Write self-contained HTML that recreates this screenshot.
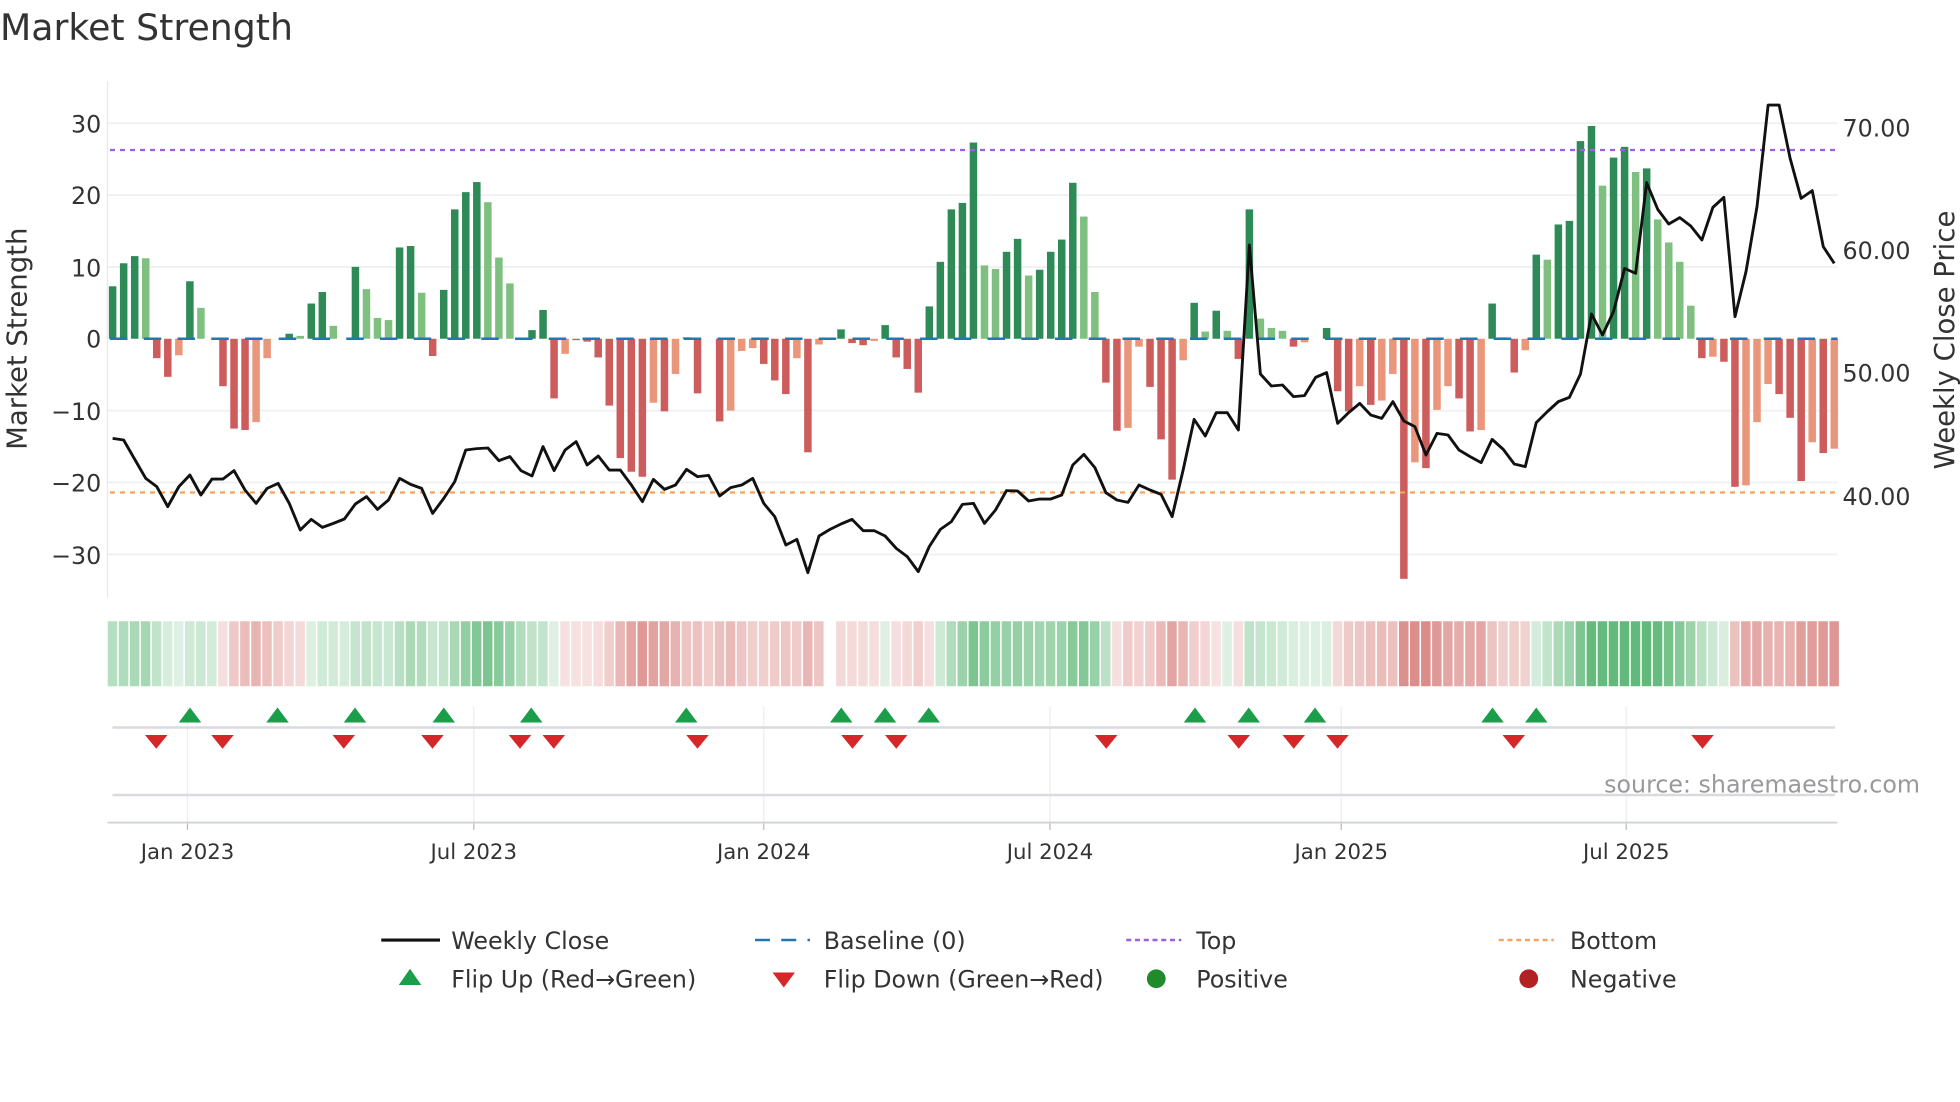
<!DOCTYPE html>
<html><head><meta charset="utf-8">
<style>
html,body{margin:0;padding:0;background:#fff;}
svg{display:block;font-family:"DejaVu Sans","Liberation Sans",sans-serif;}
</style></head>
<body>
<svg id="c" width="1960" height="1102" viewBox="0 0 1568 881.6" xmlns="http://www.w3.org/2000/svg">
<text x="0" y="32" font-size="29" fill="#333">Market Strength</text>
<g id="grid"></g>
<line x1="86" y1="65" x2="86" y2="478" stroke="#e6e8eb" stroke-width="1"/>
<g id="strip"></g>
<g id="bars"></g>
<line x1="88" y1="271" x2="1470" y2="271" stroke="#1f77b4" stroke-width="2" stroke-dasharray="14,13"/>
<line x1="88" y1="120" x2="1470" y2="120" stroke="#9b5fe0" stroke-width="1.8" stroke-dasharray="4,4"/>
<line x1="88" y1="394" x2="1470" y2="394" stroke="#f4a460" stroke-width="1.8" stroke-dasharray="4,4"/>
<polyline id="price" fill="none" stroke="#111" stroke-width="2.3" stroke-linejoin="round"/>
<g font-size="19" fill="#333" text-anchor="end">
<text x="81" y="106">30</text><text x="81" y="163">20</text><text x="81" y="221">10</text><text x="81" y="278">0</text>
<text x="81" y="336">−10</text><text x="81" y="393">−20</text><text x="81" y="451">−30</text>
</g>
<g font-size="19" fill="#333">
<text x="1474" y="109">70.00</text><text x="1474" y="207">60.00</text><text x="1474" y="305">50.00</text><text x="1474" y="404">40.00</text>
</g>
<text transform="translate(21,271) rotate(-90)" font-size="22" fill="#333" text-anchor="middle">Market Strength</text>
<text transform="translate(1563,272) rotate(-90)" font-size="22" fill="#333" text-anchor="middle">Weekly Close Price</text>
<g id="vg"></g>
<line x1="90" y1="582" x2="1468" y2="582" stroke="#d9dadd" stroke-width="2"/>
<line x1="90" y1="636" x2="1468" y2="636" stroke="#d9dadd" stroke-width="2"/>
<line x1="86" y1="658" x2="1470" y2="658" stroke="#cfd2d6" stroke-width="1.5"/>
<g id="marks"></g>
<text x="1536" y="634" font-size="19" fill="#999" text-anchor="end">source: sharemaestro.com</text>
<g font-size="17" fill="#333" text-anchor="middle">
<text x="150" y="687">Jan 2023</text><text x="379" y="687">Jul 2023</text><text x="611" y="687">Jan 2024</text>
<text x="840" y="687">Jul 2024</text><text x="1073" y="687">Jan 2025</text><text x="1301" y="687">Jul 2025</text>
</g>
<g font-size="19" fill="#333">
<line x1="305" y1="752" x2="352" y2="752" stroke="#111" stroke-width="2.5"/>
<text x="361" y="759">Weekly Close</text>
<line x1="604" y1="752" x2="648" y2="752" stroke="#1f77b4" stroke-width="2" stroke-dasharray="12,9"/>
<text x="659" y="759">Baseline (0)</text>
<line x1="901" y1="752" x2="945" y2="752" stroke="#9b5fe0" stroke-width="2" stroke-dasharray="4,3"/>
<text x="957" y="759">Top</text>
<line x1="1199" y1="752" x2="1243" y2="752" stroke="#f4a460" stroke-width="2" stroke-dasharray="4,3"/>
<text x="1256" y="759">Bottom</text>
<polygon points="319,788 337,788 328,775" fill="#1a9e4a"/>
<text x="361" y="790">Flip Up (Red→Green)</text>
<polygon points="618,778 636,778 627,790" fill="#d62728"/>
<text x="659" y="790">Flip Down (Green→Red)</text>
<circle cx="925" cy="783" r="7.5" fill="#1e8c2a"/>
<text x="957" y="790">Positive</text>
<circle cx="1223" cy="783" r="7.5" fill="#b22222"/>
<text x="1256" y="790">Negative</text>
</g>
</svg>
<script>
var NS="http://www.w3.org/2000/svg";
function el(p,t,a){var e=document.createElementNS(NS,t);for(var k in a)e.setAttribute(k,a[k]);document.getElementById(p).appendChild(e);return e;}
var D="G7.3 G10.5 G11.5 g11.2 R-2.7 R-5.3 r-2.3 G8 g4.3 G0 R-6.6 R-12.5 R-12.7 r-11.6 r-2.7 G0 G0.7 g0.4 G4.9 G6.5 g1.8 G0 G10 g6.9 g2.9 g2.6 G12.7 G12.9 g6.4 R-2.4 G6.8 G18 G20.4 G21.8 g19 g11.3 g7.7 G0 G1.2 G4 R-8.3 r-2.1 R-0.2 R-0.4 R-2.6 R-9.3 R-16.6 R-18.5 R-19.2 r-8.9 R-10.1 r-4.9 G0.2 R-7.6 G0 R-11.5 r-10 r-1.7 r-1.3 R-3.5 R-5.8 R-7.7 r-2.7 R-15.8 r-0.8 G0 G1.3 R-0.6 R-0.9 r-0.3 G1.9 R-2.6 R-4.2 R-7.5 G4.5 G10.7 G18 G18.9 G27.3 g10.2 g9.7 G12.1 G13.9 g8.8 G9.6 G12.1 G13.8 G21.7 g17 g6.5 R-6.1 R-12.8 r-12.4 r-1.1 R-6.7 R-14 R-19.6 r-3 G5 g1 G3.9 g1.1 R-2.8 G18 g2.8 g1.5 g1.1 R-1.1 r-0.5 G0 G1.5 R-7.3 R-10.1 r-6.6 R-9.2 r-8.6 r-4.9 R-33.4 r-17.2 R-18 r-9.9 r-6.6 R-8.3 R-12.9 r-12.7 G4.9 g0.2 R-4.7 r-1.6 G11.7 g11 G15.9 G16.4 G27.5 G29.6 g21.3 G25.2 G26.7 g23.2 G23.7 g16.6 g13.4 g10.7 g4.6 R-2.7 r-2.5 R-3.2 R-20.6 r-20.4 r-11.6 r-6.3 R-7.7 R-11 R-19.8 r-14.4 R-15.9 r-15.3".split(" ");
var col={G:"#2e8b57",g:"#7fbf7f",R:"#cd5c5c",r:"#e9967a"};
var s=8.829,x0=90.1,z=271,u=5.75;
for(var v=30;v>=-30;v-=10){if(v!==0)el("grid","line",{x1:86,x2:1470,y1:z-v*u,y2:z-v*u,stroke:"#eef0f3","stroke-width":1.5});}
var vals=[];
D.forEach(function(d,i){var c=d[0],v=parseFloat(d.slice(1));vals.push(v);var x=x0+i*s;
 if(v!==0){var y=v>0?z-v*u:z,h=Math.abs(v)*u;el("bars","rect",{x:x-3,y:y,width:6,height:h,fill:col[c]});}});
var ema=0;
vals.forEach(function(v,i){ema=i==0?v:ema*0.65+v*0.35;if(i===65)return;var a=Math.min(0.8,0.16+Math.abs(ema)/34);
 var f=ema>=0?"rgba(60,168,90,"+a+")":"rgba(200,80,75,"+a+")";el("strip","rect",{x:x0+i*s-3.9,y:497,width:7.6,height:52,fill:f});});
var P1=[955,960,1018,1075,1100,1160,1100,1065,1125,1077,1077,1052,1110,1150,1105,1090,1150,1230,1198,1222,1210,1197,1152,1130,1168,1140,1075,1093,1105,1180,1135,1085,990,986,984,1022,1010,1052,1068,980,1052,990,965,1035,1008,1050,1050,1095,1145,1078,1108,1095,1048,1070,1066,1128,1103,1095,1075,1150,1190,1275,1258,1358,1248,1228,1212,1198,1232,1232,1248,1285,1310,1355,1280,1228,1205,1153,1150,1210,1170,1112,1113,1143,1137,1137,1125,1035,1003,1043,1118,1140,1147,1095,1110,1123,1190,1050,898,948,878,878,930,375,762,798,795,830,827,772,758,910,878,850,885,895,845,903,920];
var P2=[1095,1030,1035,1080,1100,1118,1048,1078,1122,1130,998,965,935,922,852,672,735,665,535,550,278,358,402,383,408,450,352,322,680,545,350,45,45,205,325,302,470,520];
var pts=[];P1.forEach(function(y,i){pts.push((x0+i*s).toFixed(1)+","+(y/3.75+96).toFixed(1));});
P2.forEach(function(y,i){pts.push((x0+(119+i)*s).toFixed(1)+","+(y/3.75+72).toFixed(1));});
document.getElementById("price").setAttribute("points",pts.join(" "));
[150,379,611,840,1073,1301].forEach(function(x){el("vg","line",{x1:x,x2:x,y1:565,y2:658,stroke:"#eceef1","stroke-width":1});el("vg","line",{x1:x,x2:x,y1:658,y2:664,stroke:"#bbb","stroke-width":1});});
[152,222,284,355,425,549,673,708,743,956,999,1052,1194,1229].forEach(function(x){el("marks","polygon",{points:(x-9)+",578 "+(x+9)+",578 "+x+",566",fill:"#1a9e4a"});});
[125,178,275,346,416,443,558,682,717,885,991,1035,1070,1211,1362].forEach(function(x){el("marks","polygon",{points:(x-9)+",588 "+(x+9)+",588 "+x+",599",fill:"#d62728"});});
</script>
</body></html>
